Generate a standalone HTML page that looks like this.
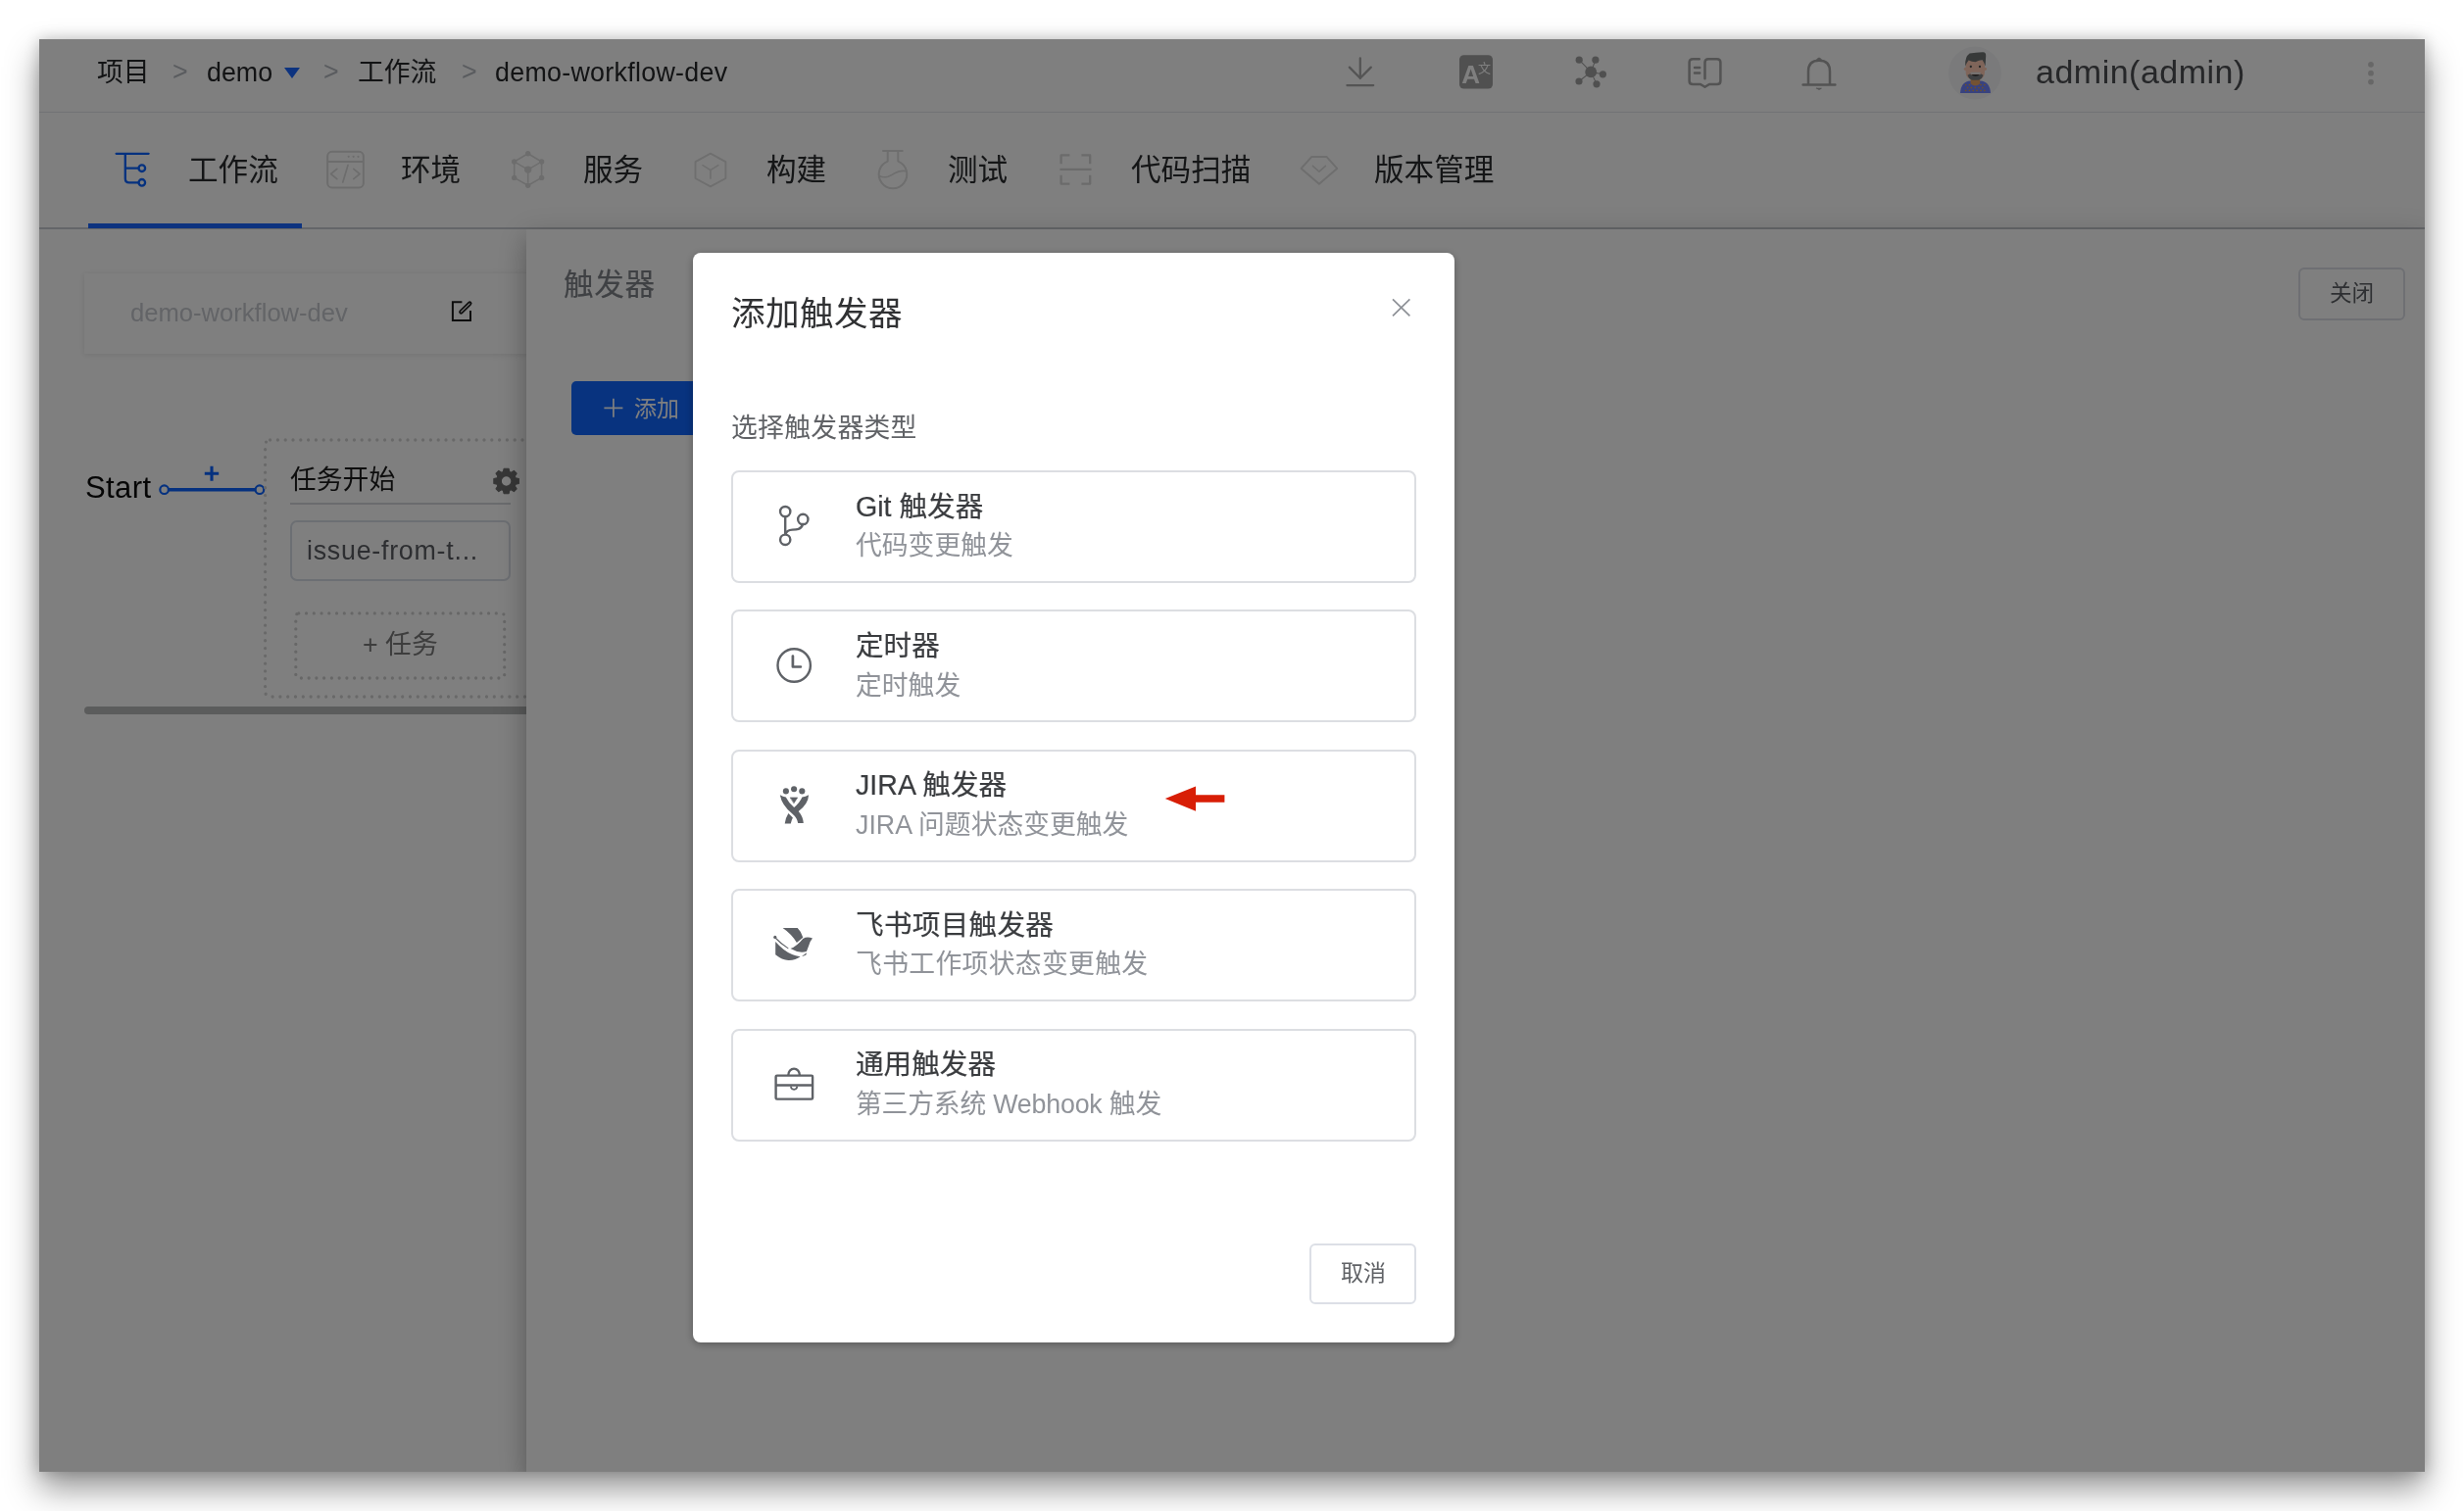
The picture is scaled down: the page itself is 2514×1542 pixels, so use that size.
<!DOCTYPE html>
<html lang="zh-CN">
<head>
<meta charset="utf-8">
<title>添加触发器</title>
<style>
html,body{margin:0;padding:0}
body{width:2514px;height:1542px;background:#fff;position:relative;overflow:hidden;
  font-family:"Liberation Sans","Noto Sans CJK SC",sans-serif;color:#303133}
.a{position:absolute}
.t{position:absolute;white-space:nowrap;line-height:1;transform-origin:0 0;will-change:transform}
svg{position:absolute;overflow:visible;will-change:transform}
.win{left:40px;top:40px;width:2434px;height:1462px;background:#fff;
  box-shadow:0 17px 32px rgba(0,0,0,.42),0 0 14px rgba(0,0,0,.2)}
.clip{left:40px;top:40px;width:2434px;height:1462px;overflow:hidden}
.clip>.in{position:absolute;left:-40px;top:-40px;width:2514px;height:1542px}
.bc{font-size:26.8px;color:#26282b;top:61px}
.sep{font-size:26.8px;color:#b4b8bf;top:60px}
.tab{font-size:30.6px;color:#2a2c2f;top:157.6px}
.mask{left:40px;top:40px;width:2434px;height:1462px;background:rgba(0,0,0,.5)}
.modal{left:707px;top:258px;width:777px;height:1112px;background:#fff;border-radius:8px;
  box-shadow:0 2px 8px rgba(0,0,0,.3)}
.card{left:746px;width:695px;height:111px;border:2px solid #dcdee2;border-radius:8px;background:#fff}
.ct{left:873px;font-size:28.6px;color:#3a3c3f;font-weight:400;-webkit-text-stroke:.2px #3a3c3f}
.cs{left:873px;font-size:26.8px;color:#909399}
</style>
</head>
<body>
<div class="a win"></div>
<div class="a clip"><div class="in" id="page">

<!-- ===== header ===== -->
<div class="a" style="left:40px;top:114px;width:2434px;height:1px;background:#e3e5ea"></div>
<div class="t bc" id="bc1" style="left:99px">项目</div>
<div class="t sep" id="sp1" style="left:176px">&gt;</div>
<div class="t bc" id="bc2" style="left:211px">demo</div>
<div class="a" id="tri" style="left:290px;top:69px;width:0;height:0;border-left:8.5px solid transparent;border-right:8.5px solid transparent;border-top:11px solid #1a66ff"></div>
<div class="t sep" id="sp2" style="left:330px">&gt;</div>
<div class="t bc" id="bc3" style="left:365px">工作流</div>
<div class="t sep" id="sp3" style="left:471px">&gt;</div>
<div class="t bc" id="bc4" style="left:505px;letter-spacing:.3px">demo-workflow-dev</div>
<!-- download -->
<svg style="left:0;top:0" width="2514" height="1542" viewBox="0 0 2514 1542" fill="none" stroke-linecap="round" stroke-linejoin="round">
 <g stroke="#a8a8a8" stroke-width="2.25">
  <path d="M1387.8 59.4V80 M1376.8 68.6 L1387.8 79.8 L1398.8 68.6 M1374.4 87H1401.2"/>
 </g>
 <!-- translate -->
 <rect x="1489" y="56.3" width="34" height="34.2" rx="4.5" fill="#a0a0a0"/>
 <text x="1491.2" y="84.6" font-family="Liberation Sans, sans-serif" font-weight="700" font-size="26" fill="#fff">A</text>
 <text x="1508" y="74.2" font-family="Noto Sans CJK SC, sans-serif" font-size="13" fill="#fff">文</text>
 <!-- network -->
 <g stroke="#a0a0a0" stroke-width="1.05">
  <path d="M1623.2 73.4L1611.2 61.2 M1623.2 73.4L1627.9 61.2 M1623.2 73.4L1635.4 75.8 M1623.2 73.4L1611 83 M1623.2 73.4L1629 85.8"/>
 </g>
 <g fill="#a0a0a0">
  <circle cx="1623.2" cy="73.4" r="5.9"/>
  <circle cx="1611.2" cy="61.2" r="3.6"/><circle cx="1627.9" cy="61.2" r="3.6"/>
  <circle cx="1635.4" cy="75.8" r="3.6"/><circle cx="1611" cy="83" r="3.6"/><circle cx="1629" cy="85.8" r="3.6"/>
 </g>
 <!-- book -->
 <g stroke="#a6a6a6" stroke-width="2.5">
  <path d="M1733.8 60.2H1727.2Q1723.6 60.2 1723.6 63.8V82.4Q1723.6 86 1727.2 86H1735L1739.5 88.8L1744 86H1751.8Q1755.4 86 1755.4 82.4V63.8Q1755.4 60.2 1751.8 60.2H1743.1Q1739.5 60.2 1739.5 63.8V80.2"/>
  <path d="M1729 69H1734.2 M1729 74.4H1734.2"/>
 </g>
 <!-- bell -->
 <g stroke="#a6a6a6" stroke-width="2.5">
  <path d="M1845 86.4V73Q1845 61.8 1856 61.8Q1867 61.8 1867 73V86.4 M1839.6 86.5H1872.4"/>
 </g>
 <path d="M1853.4 61.2Q1856 56.6 1858.6 61.2Z" fill="#a6a6a6" stroke="#a6a6a6" stroke-width="1"/>
 <path d="M1853.6 90.2H1858.4Q1856 92.6 1853.6 90.2Z" fill="#a6a6a6" stroke="#a6a6a6" stroke-width="0.8"/>
 <!-- avatar -->
 <circle cx="2015" cy="74.6" r="27" fill="#f4f5f7"/>
 <g stroke="none">
  <!-- shirt -->
  <path d="M2000 94.9Q2001 83 2010.5 82.6H2020.5Q2030 83 2031 94.9Z" fill="#7084ff"/>
  <!-- neck -->
  <path d="M2010.6 80H2020.2V85.5Q2015.4 89.5 2010.6 85.5Z" fill="#e8a565"/>
  <!-- ears -->
  <circle cx="2005.4" cy="70.3" r="1.6" fill="#ffc9b0"/><circle cx="2025.4" cy="70.3" r="1.6" fill="#ffc9b0"/>
  <!-- face -->
  <path d="M2005.6 61.5H2025V73Q2025 79 2021 80.5H2010Q2005.6 79 2005.6 73Z" fill="#ffcbb4"/>
  <!-- hair -->
  <path d="M2005.2 67.6Q2004.6 58 2009.6 54.6Q2016 53.4 2022.4 53.3Q2026.4 52.6 2026.2 57L2025.6 67.6Q2024.4 63.6 2022.6 61.2Q2019 61.4 2015.6 63.2Q2011.6 63 2008.6 61.4Q2006.6 63.6 2005.2 67.6Z" fill="#6e7373"/>
  <!-- eyes -->
  <circle cx="2010.8" cy="68" r="1.15" fill="#4a4e50"/><circle cx="2020" cy="68" r="1.15" fill="#4a4e50"/>
  <!-- mustache -->
  <rect x="2010.4" y="73.8" width="10.4" height="1.9" rx=".6" fill="#e6e6e6"/>
  <!-- beard -->
  <path d="M2007.4 76.8L2010.2 75.2L2011.2 76.4H2020L2021 75.2L2023.6 76.8Q2022.6 80.4 2019 81.8H2012Q2008.4 80.4 2007.4 76.8Z" fill="#7c8084"/>
  <!-- mouth -->
  <path d="M2011 76.2H2020.2Q2015.6 78.8 2011 76.2Z" fill="#141414"/>
 </g>
 <g fill="#e9a43c">
  <circle cx="2005.6" cy="86.6" r=".8"/><circle cx="2009.4" cy="86.6" r=".8"/><circle cx="2021" cy="86.6" r=".8"/><circle cx="2024.8" cy="86.6" r=".8"/>
  <circle cx="2007.6" cy="89.6" r=".8"/><circle cx="2011.4" cy="89.6" r=".8"/><circle cx="2015.2" cy="89.6" r=".8"/><circle cx="2019" cy="89.6" r=".8"/><circle cx="2022.8" cy="89.6" r=".8"/>
  <circle cx="2005.6" cy="92.4" r=".8"/><circle cx="2009.4" cy="92.4" r=".8"/><circle cx="2013.2" cy="92.4" r=".8"/><circle cx="2017" cy="92.4" r=".8"/><circle cx="2021" cy="92.4" r=".8"/><circle cx="2024.8" cy="92.4" r=".8"/>
 </g>
 <!-- more dots -->
 <g fill="#cfcfcf"><circle cx="2419" cy="65.8" r="2.9"/><circle cx="2419" cy="74.7" r="2.9"/><circle cx="2419" cy="83.6" r="2.9"/></g>
</svg>

<div class="t" id="adm" style="left:2077px;top:56px;font-size:34px;color:#4c4e52;letter-spacing:.5px">admin(admin)</div>

<!-- ===== tabs ===== -->
<div class="a" style="left:40px;top:232px;width:2434px;height:2px;background:#c9ccd2"></div>
<div class="a" style="left:90px;top:228px;width:218px;height:5px;background:#1a66ff"></div>
<div class="t tab" id="tb1" style="left:192px">工作流</div>
<div class="t tab" id="tb2" style="left:409px">环境</div>
<div class="t tab" id="tb3" style="left:595px">服务</div>
<div class="t tab" id="tb4" style="left:782px">构建</div>
<div class="t tab" id="tb5" style="left:967px">测试</div>
<div class="t tab" id="tb6" style="left:1154px">代码扫描</div>
<div class="t tab" id="tb7" style="left:1402px">版本管理</div>
<svg style="left:0;top:0" width="2514" height="1542" viewBox="0 0 2514 1542" fill="none" stroke-linecap="round" stroke-linejoin="round">
 <!-- workflow (active) -->
 <g stroke="#0b63ff" stroke-width="2.3">
  <path d="M118.6 156.8H151.6 M127.8 157V182.2Q127.8 186.3 131.9 186.3H141.4 M127.8 171.7H141.4"/>
  <circle cx="144.8" cy="171.7" r="3.3"/><circle cx="144.8" cy="186.3" r="3.3"/>
 </g>
 <!-- env -->
 <g stroke="#dadada" stroke-width="2">
  <rect x="334.2" y="154.8" width="36.6" height="36.6" rx="4.5"/>
  <path d="M334.6 165H370.4"/>
  <path d="M343.8 172.4L337.6 177.5L343.8 182.6 M355 168.4L349.8 186 M360.8 172.4L367 177.5L360.8 182.6" stroke-width="1.7"/>
 </g>
 <g fill="#dadada"><circle cx="355.7" cy="159.8" r="1.1"/><circle cx="360.6" cy="159.8" r="1.1"/><circle cx="365.5" cy="159.8" r="1.1"/></g>
 <!-- service -->
 <g stroke="#dcdcdc" stroke-width="1.6">
  <path d="M538.7 156.8L552.6 165V181.4L538.7 189.3L524.7 181.4V165Z"/>
  <path d="M538.7 173.1L527.5 166.6 M538.7 173.1L549.8 166.6 M538.7 173.1V186"/>
 </g>
 <g fill="#dadada">
  <circle cx="538.7" cy="173.1" r="3.7"/>
  <circle cx="538.7" cy="156.8" r="2.7"/><circle cx="552.6" cy="165" r="2.7"/><circle cx="552.6" cy="181.4" r="2.7"/>
  <circle cx="538.7" cy="189.3" r="2.7"/><circle cx="524.7" cy="181.4" r="2.7"/><circle cx="524.7" cy="165" r="2.7"/>
 </g>
 <!-- build -->
 <g stroke="#dedede" stroke-width="1.9">
  <path d="M724.9 156.6L740.4 165.2V182L724.9 190.4L709.5 182V165.2Z"/>
  <path d="M724.9 173.6L717 168.6 M724.9 173.6L732.8 168.6 M724.9 173.6V182" stroke-width="1.7"/>
 </g>
 <!-- test -->
 <g stroke="#dcdcdc" stroke-width="2">
  <path d="M901 154.1H920.8 M905.7 154.4V164.6A14.3 14.3 0 1 0 916.3 164.6V154.4"/>
  <path d="M897.6 179.8Q901.5 181.5 906 180.2Q910.5 178.6 913.5 176.4Q918.5 173.6 924.6 174.6" stroke-width="1.7"/>
 </g>
 <!-- scan -->
 <g stroke="#d6d6d6" stroke-width="2.3" stroke-linecap="butt">
  <path d="M1091.4 158.4H1082.6V167.2 M1103.4 158.4H1112.2V167.2 M1082.6 178.8V187.6H1091.4 M1112.2 178.8V187.6H1103.4 M1081.4 172.9H1113.6"/>
 </g>
 <!-- version -->
 <g stroke="#dcdcdc" stroke-width="2">
  <path d="M1338.4 159.9H1353.4L1364.2 171.9L1345.9 187.8L1327.6 171.9Z"/>
  <path d="M1339.4 169.3L1345.9 175.2L1352.4 169.3" stroke-width="1.6"/>
 </g>
</svg>


<!-- ===== left workflow panel ===== -->
<!-- workflow name box -->
<div class="a" style="left:86px;top:279px;width:520px;height:82px;background:#fff;box-shadow:0 1px 6px rgba(0,0,0,.11)"></div>
<div class="t" id="wfname" style="left:132.6px;top:307.4px;font-size:25.6px;color:#c6c9cf">demo-workflow-dev</div>
<svg style="left:0;top:0" width="2514" height="1542" viewBox="0 0 2514 1542" fill="none" stroke-linecap="round" stroke-linejoin="round">
 <!-- edit icon -->
 <g stroke="#1c1c1c" stroke-width="2" stroke-linecap="butt" stroke-linejoin="miter">
  <path d="M471.4 308.3H461.9V326.95H480V317"/>
 </g>
 <path d="M470.4 318.4L479.3 309.6" stroke="#1c1c1c" stroke-width="4.4"/>
 <path d="M470.6 318.2L479.1 309.8" stroke="#fff" stroke-width="1.15"/>
 <!-- start line -->
 <path d="M172 499.7H260.5" stroke="#0b63ff" stroke-width="3.4" stroke-linecap="butt"/>
 <circle cx="167.6" cy="499.7" r="4.3" stroke="#0b63ff" stroke-width="2.2" fill="#fff"/>
 <circle cx="264.9" cy="499.7" r="4.3" stroke="#0b63ff" stroke-width="2.2" fill="#fff"/>
 <path d="M208.8 483.3H223.2 M216 475.8V490.8" stroke="#0b63ff" stroke-width="3.1" stroke-linecap="butt"/>
 <!-- stage dotted box -->
 <rect x="270.6" y="449" width="330" height="262" rx="5" stroke="#d2d2d2" stroke-width="3.3" stroke-dasharray="0 7.8"/>
 <!-- add task dotted box -->
 <rect x="301.8" y="625.9" width="212.9" height="66.1" rx="3" stroke="#cfcfcf" stroke-width="3.3" stroke-dasharray="0 7.75"/>
 <!-- gear -->
 <g transform="translate(516.6 491) scale(.95)">
  <path fill="#6e6e6e" d="M-2.6 -13.4H2.6L3.4 -9.9L5.2 -9.2L8.2 -11.1L11.1 -8.2L9.2 -5.2L9.9 -3.4L13.4 -2.6V2.6L9.9 3.4L9.2 5.2L11.1 8.2L8.2 11.1L5.2 9.2L3.4 9.9L2.6 13.4H-2.6L-3.4 9.9L-5.2 9.2L-8.2 11.1L-11.1 8.2L-9.2 5.2L-9.9 3.4L-13.4 2.6V-2.6L-9.9 -3.4L-9.2 -5.2L-11.1 -8.2L-8.2 -11.1L-5.2 -9.2L-3.4 -9.9Z M0 -5.6A5.6 5.6 0 1 0 0 5.6A5.6 5.6 0 1 0 0 -5.6Z" fill-rule="evenodd" stroke="#6e6e6e" stroke-width="1.2"/>
 </g>
</svg>
<div class="t" id="start" style="left:87px;top:482.4px;font-size:31px;color:#0c0c0c;letter-spacing:.4px">Start</div>
<div class="t" id="stage" style="left:296px;top:477px;font-size:26.8px;color:#1c1c1c">任务开始</div>
<div class="a" style="left:296px;top:513px;width:225px;height:2px;background:#d4d7dc"></div>
<div class="a" style="left:296px;top:531px;width:220.5px;height:57.5px;border:2px solid #d9dee6;border-radius:7px"></div>
<div class="t" id="job" style="left:312.6px;top:549px;font-size:26.8px;color:#5a5d62;letter-spacing:.75px">issue-from-t...</div>
<div class="t" id="addtask" style="left:370px;top:645.2px;font-size:26.8px;color:#7a7a7a">+ 任务</div>
<!-- scrollbar -->
<div class="a" style="left:86px;top:721px;width:520px;height:8px;border-radius:4px;background:#b6b8b8"></div>


<!-- ===== drawer ===== -->
<div class="a" id="drawer" style="left:536.6px;top:234px;width:1937.4px;height:1268px;background:#fff;box-shadow:0 8px 10px -5px rgba(0,0,0,.2),0 16px 24px 2px rgba(0,0,0,.14),0 6px 30px 5px rgba(0,0,0,.12)"></div>
<div class="t" id="dtitle" style="left:575px;top:275.1px;font-size:30.6px;color:#7f8288;letter-spacing:.6px;-webkit-text-stroke:.15px #7f8288">触发器</div>
<div class="a" style="left:583px;top:389px;width:150px;height:55px;border-radius:5px;background:#1066ff"></div>
<svg style="left:0;top:0" width="2514" height="1542" viewBox="0 0 2514 1542" fill="none">
 <path d="M616.4 416.3H635.4 M625.9 406.8V425.8" stroke="#fff" stroke-width="1.7"/>
</svg>
<div class="t" id="addbtn" style="left:647px;top:405.8px;font-size:23px;color:#fff">添加</div>
<div class="a" style="left:2345.2px;top:272.7px;width:104.4px;height:50px;border:2px solid #dcdfe6;border-radius:6px"></div>
<div class="t" id="closebtn" style="left:2376.6px;top:289.2px;font-size:22.6px;color:#5c5f64">关闭</div>


</div></div>

<!-- ===== overlay ===== -->
<div class="a mask"></div>

<!-- ===== modal ===== -->
<div class="a modal" id="modal"></div>
<div class="t" id="mtitle" style="left:746px;top:303.4px;font-size:34.6px;color:#303133;letter-spacing:.4px">添加触发器</div>
<svg style="left:0;top:0" width="2514" height="1542" viewBox="0 0 2514 1542" fill="none" stroke-linecap="round" stroke-linejoin="round">
 <path d="M1421 305.4L1438.4 322.4 M1438.4 305.4L1421 322.4" stroke="#8d9096" stroke-width="1.7" stroke-linecap="butt"/>
</svg>
<div class="t" id="mlabel" style="left:746px;top:423.5px;font-size:26.8px;color:#606266;letter-spacing:.3px">选择触发器类型</div>

<div class="a card" style="top:480px"></div>
<div class="a card" style="top:622.3px"></div>
<div class="a card" style="top:764.8px"></div>
<div class="a card" style="top:907px"></div>
<div class="a card" style="top:1049.6px"></div>

<div class="t ct" id="c1t" style="top:502.6px">Git 触发器</div>
<div class="t cs" id="c1s" style="top:544.4px">代码变更触发</div>
<div class="t ct" id="c2t" style="top:644.9px">定时器</div>
<div class="t cs" id="c2s" style="top:686.7px">定时触发</div>
<div class="t ct" id="c3t" style="top:787.4px">JIRA 触发器</div>
<div class="t cs" id="c3s" style="top:829.2px">JIRA 问题状态变更触发</div>
<div class="t ct" id="c4t" style="top:929.6px;letter-spacing:.3px">飞书项目触发器</div>
<div class="t cs" id="c4s" style="top:971.4px;letter-spacing:.33px">飞书工作项状态变更触发</div>
<div class="t ct" id="c5t" style="top:1072.2px">通用触发器</div>
<div class="t cs" id="c5s" style="top:1114.0px;letter-spacing:-.2px">第三方系统 Webhook 触发</div>

<svg style="left:0;top:0" width="2514" height="1542" viewBox="0 0 2514 1542" fill="none" stroke-linecap="round" stroke-linejoin="round">
 <!-- git -->
 <g stroke="#5f6267" stroke-width="2.4">
  <circle cx="801.2" cy="522.1" r="5.15"/><circle cx="801.2" cy="550.8" r="5.15"/><circle cx="819.3" cy="529.9" r="5.15"/>
  <path d="M801.2 527.4V545.6 M819 535.2C817.4 540.6 812.6 540.6 808.4 540.6C804.2 540.7 802.2 542.6 801.4 545.4" stroke-linecap="butt"/>
 </g>
 <!-- clock -->
 <g stroke="#5f6267">
  <circle cx="810.2" cy="679" r="16.7" stroke-width="2.4"/>
  <path d="M808.9 669.6V680.5H816.9" stroke-width="2.7"/>
 </g>
 <!-- jira -->
 <g fill="#5f6267">
  <circle cx="801.9" cy="807.4" r="3.05"/><circle cx="810.1" cy="805.3" r="3.05"/><circle cx="818.3" cy="807.4" r="3.05"/>
  <path d="M806.5 813.9H813.7L810.1 819.5Z" stroke="#5f6267" stroke-width=".6"/>
  <path d="M795.8 811.2Q799 812.9 801.8 813.6Q804.6 819.6 810.2 823.9Q815.8 819.6 818.4 813.6Q822 812.9 825.1 811.2Q824.6 820.6 814.7 827.9Q819.2 833 819.8 839.9H814.2Q813.4 834.6 808.4 830.4Q797.8 822 795.8 811.2Z"/>
  <path d="M804.4 830L808.9 834.5Q807.3 837.4 806.8 840.6H800.7Q801.5 834.4 804.4 830Z"/>
 </g>
 <!-- feishu -->
 <g fill="#5f6267">
  <path d="M798.6 947H813.7Q817.9 951 819.3 956.8L812.9 962.1Q808 953.4 798.6 947Z"/>
  <path d="M806.5 968.1Q813.2 965.4 819.2 957.9Q823.6 955.1 829 957.6Q826.6 960.4 825.4 964.6L822.9 971Q815 973.2 806.5 968.1Z"/>
  <path d="M791.2 961V974.2Q798 979.6 804.4 980Q811.6 980.2 816.6 976.3Q807 974.6 799.6 968.9Q795 965.4 791.2 961Z"/>
  <path d="M818.2 975.6Q821 974.8 822.5 972.3Q823.1 973.5 822.4 974.5Q820.6 975.9 818.2 975.6Z"/>
  <circle cx="790.8" cy="956.4" r="1.6"/>
 </g>
 <path d="M791 957Q797 963.4 803.9 967.6" stroke="#5f6267" stroke-width="1.1"/>
 <!-- briefcase -->
 <g stroke="#5f6267" stroke-width="2.4" stroke-linejoin="round">
  <rect x="791.6" y="1097.6" width="37.5" height="24" rx="1.2"/>
  <path d="M791.6 1107.5H829.1" stroke-linecap="butt"/>
  <path d="M804.3 1097.4A5.8 6.8 0 0 1 815.9 1097.4" stroke-linecap="butt"/>
  <path d="M806.9 1108.6A3.2 3.2 0 0 0 813.3 1108.6" stroke-width="1.7" stroke-linecap="butt"/>
 </g>
 <!-- red arrow -->
 <path d="M1188.8 815L1220 802.4V811.2H1249.4V818.8H1220V827.8Z" fill="#d81e06"/>
</svg>

<div class="a" style="left:1336.2px;top:1269.4px;width:104.6px;height:57.4px;border:2px solid #dcdfe6;border-radius:6px"></div>
<div class="t" id="cancel" style="left:1367.6px;top:1288.3px;font-size:23px;color:#606266">取消</div>


</body>
</html>
